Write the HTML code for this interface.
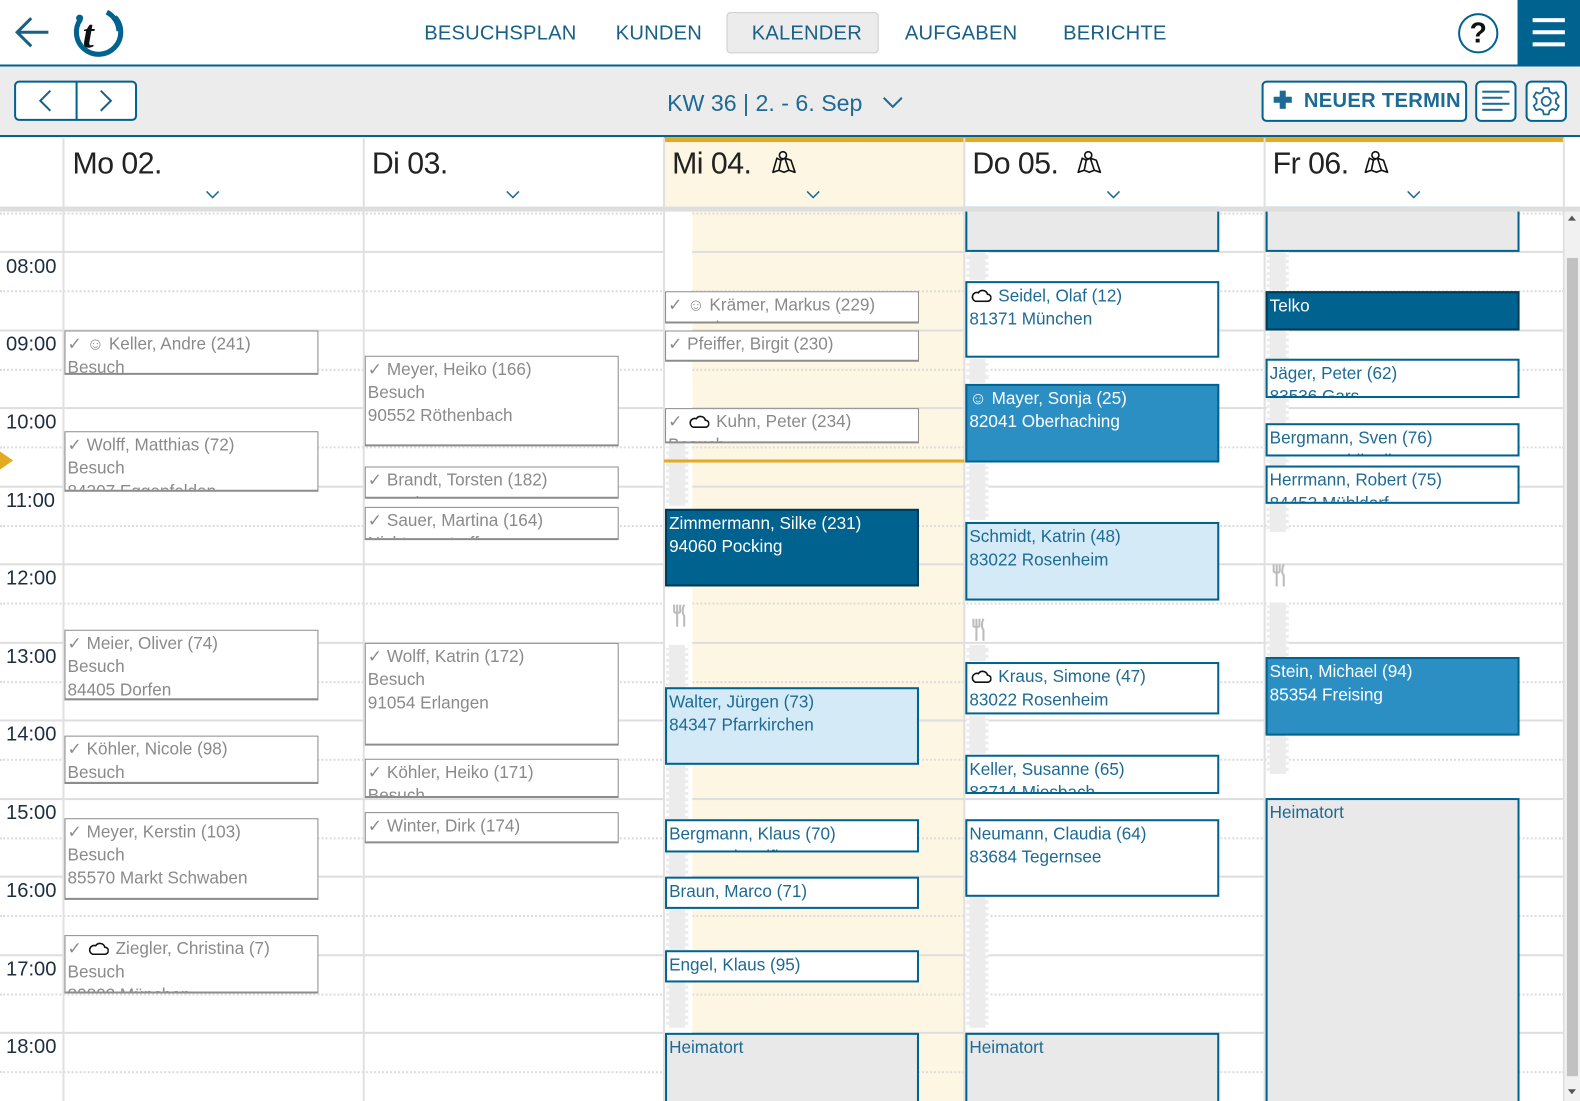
<!DOCTYPE html>
<html><head><meta charset="utf-8">
<style>
*{box-sizing:border-box;margin:0;padding:0}
html,body{width:1580px;height:1101px;overflow:hidden;background:#fff;font-family:"Liberation Sans",sans-serif}
#w{position:absolute;left:0;top:0;width:1568px;height:1093px;transform:scale(1.00765);transform-origin:0 0;overflow:hidden}
.a{position:absolute}
.nav{position:absolute;top:22px;font-size:20px;color:#1a5f86;letter-spacing:0.2px}
.hl{position:absolute;left:0;width:1552px;height:2px;background:#dedede}
.dl{position:absolute;left:0;width:1552px;height:0;border-top:2px dotted #dcdcdc}
.vl{position:absolute;top:137px;width:2px;height:960px;background:#e0e0e0}
.tl{position:absolute;left:6px;font-size:20px;color:#1e2e40}
.ev{position:absolute;overflow:hidden;font-size:17px;line-height:23px;padding:1px 0 0 2px;white-space:nowrap}
.d{border:1.5px solid #8c8c8c;border-bottom-width:2px;color:#8a8a8a;background:#fff}
.b{border:2px solid #00628f;color:#1d6a94;background:#fff}
.m{border:2px solid #00628f;color:#fff;background:#2b8fc4}
.k{border:2px solid #003a55;color:#fff;background:#00628f}
.l{border:2px solid #00628f;color:#1d6a94;background:#d4ebf7}
.g{border:2px solid #00628f;color:#1d6a94;background:#e9e9e9}
.dh{position:absolute;top:146px;font-size:30px;color:#222;letter-spacing:-0.5px}
.chev{position:absolute;top:186px;width:14px;height:14px}
.strip{position:absolute;width:22px;background:#ececec;border-left:3px dotted #fff;border-right:3px dotted #fff}
.fork{position:absolute;width:16px;height:26px}
.cl{display:inline-block;width:20px;height:14px;vertical-align:-1px;margin:0 2px}
</style></head><body><div id="w">

<!-- top bar -->
<div class="a" style="left:0;top:0;width:1568px;height:64px;background:#fff"></div>
<div class="a" style="left:0;top:64px;width:1568px;height:2px;background:#00628f"></div>
<svg class="a" style="left:14px;top:16px" width="36" height="32" viewBox="0 0 36 32"><path d="M17 2 L3 16 L17 30 M3 16 H34" fill="none" stroke="#1a5f86" stroke-width="3"/></svg>
<svg class="a" style="left:70px;top:7px" width="54" height="52" viewBox="0 0 54 52">
<path d="M10 12 A22 22 0 1 0 44 10" fill="none" stroke="#00628f" stroke-width="5"/>
<path d="M36 5 A22 22 0 0 1 48 24" fill="none" stroke="#00628f" stroke-width="5"/>
<circle cx="9" cy="11" r="3.5" fill="#00628f"/>
<text x="12" y="40" font-family="Liberation Serif,serif" font-style="italic" font-weight="bold" font-size="40" fill="#111">t</text>
</svg>
<div class="nav" style="left:421px">BESUCHSPLAN</div>
<div class="nav" style="left:611px">KUNDEN</div>
<div class="a" style="left:721px;top:12px;width:151px;height:41px;background:#ececec;border:1px solid #ccc;border-radius:4px"></div>
<div class="nav" style="left:746px">KALENDER</div>
<div class="nav" style="left:898px">AUFGABEN</div>
<div class="nav" style="left:1055px">BERICHTE</div>
<div class="a" style="left:1447px;top:13px;width:40px;height:40px;border:2.5px solid #00628f;border-radius:50%;text-align:center;font-size:28px;font-weight:bold;line-height:35px;color:#111">?</div>
<div class="a" style="left:1506px;top:0;width:62px;height:64px;background:#00628f"></div>
<div class="a" style="left:1521px;top:18px;width:32px;height:4px;background:#fff"></div>
<div class="a" style="left:1521px;top:30px;width:32px;height:4px;background:#fff"></div>
<div class="a" style="left:1521px;top:42px;width:32px;height:4px;background:#fff"></div>

<!-- toolbar -->
<div class="a" style="left:0;top:66px;width:1568px;height:68px;background:#ececec"></div>
<div class="a" style="left:0;top:134px;width:1568px;height:2px;background:#00628f"></div>
<div class="a" style="left:14px;top:80px;width:122px;height:40px;border:2px solid #00628f;border-radius:5px;background:#fff"></div>
<div class="a" style="left:75px;top:81px;width:2px;height:38px;background:#00628f"></div>
<svg class="a" style="left:37px;top:88px" width="16" height="24"><path d="M13 2 L3 12 L13 22" fill="none" stroke="#1a5f86" stroke-width="2"/></svg>
<svg class="a" style="left:97px;top:88px" width="16" height="24"><path d="M3 2 L13 12 L3 22" fill="none" stroke="#1a5f86" stroke-width="2"/></svg>
<div class="a" style="left:662px;top:89px;font-size:23px;color:#1d6a94">KW 36 | 2. - 6. Sep</div>
<svg class="a" style="left:876px;top:95px" width="20" height="14"><path d="M1 2 L10 11 L19 2" fill="none" stroke="#1d6a94" stroke-width="2"/></svg>
<div class="a" style="left:1252px;top:80px;width:204px;height:41px;border:2px solid #00628f;border-radius:5px;background:#fff"></div>
<div class="a" style="left:1264px;top:90px;width:18px;height:18px">
<div class="a" style="left:6px;top:0;width:6px;height:18px;background:#1d6a94"></div>
<div class="a" style="left:0;top:6px;width:18px;height:6px;background:#1d6a94"></div></div>
<div class="a" style="left:1294px;top:89px;font-size:20px;font-weight:bold;color:#1d6a94;letter-spacing:0.3px">NEUER TERMIN</div>
<div class="a" style="left:1464px;top:80px;width:41px;height:41px;border:2px solid #00628f;border-radius:6px;background:#fff"></div>
<div class="a" style="left:1471px;top:90px;width:27px;height:2px;background:#1d6a94"></div>
<div class="a" style="left:1471px;top:96px;width:20px;height:2px;background:#1d6a94"></div>
<div class="a" style="left:1471px;top:102px;width:27px;height:2px;background:#1d6a94"></div>
<div class="a" style="left:1471px;top:108px;width:20px;height:2px;background:#1d6a94"></div>
<div class="a" style="left:1514px;top:80px;width:41px;height:41px;border:2px solid #00628f;border-radius:6px;background:#fff"></div>
<svg class="a" style="left:1519px;top:85px" width="31" height="31" viewBox="-15.5 -15.5 31 31">
<path d="M-2.5 -13 L2.5 -13 L3.3 -9.3 L6.3 -7.6 L10 -8.9 L12.5 -4.5 L9.6 -2 L9.6 2 L12.5 4.5 L10 8.9 L6.3 7.6 L3.3 9.3 L2.5 13 L-2.5 13 L-3.3 9.3 L-6.3 7.6 L-10 8.9 L-12.5 4.5 L-9.6 2 L-9.6 -2 L-12.5 -4.5 L-10 -8.9 L-6.3 -7.6 L-3.3 -9.3 Z" fill="none" stroke="#1d6a94" stroke-width="1.8" stroke-linejoin="round"/>
<circle r="4.5" fill="none" stroke="#1d6a94" stroke-width="1.8"/></svg>

<!-- day header -->
<div class="a" style="left:659px;top:136px;width:298px;height:70px;background:#fdf6e2"></div>
<div class="a" style="left:659px;top:136px;width:893px;height:5px;background:#e4aa22"></div>
<div class="dh" style="left:72px">Mo 02.</div>
<div class="dh" style="left:369px">Di 03.</div>
<div class="dh" style="left:667px">Mi 04.</div>
<div class="dh" style="left:965px">Do 05.</div>
<div class="dh" style="left:1263px">Fr 06.</div>
<svg class="chev" style="left:204px" viewBox="0 0 14 14"><path d="M1 4 L7 10 L13 4" fill="none" stroke="#1d6a94" stroke-width="1.5"/></svg>
<svg class="chev" style="left:502px" viewBox="0 0 14 14"><path d="M1 4 L7 10 L13 4" fill="none" stroke="#1d6a94" stroke-width="1.5"/></svg>
<svg class="chev" style="left:800px" viewBox="0 0 14 14"><path d="M1 4 L7 10 L13 4" fill="none" stroke="#1d6a94" stroke-width="1.5"/></svg>
<svg class="chev" style="left:1098px" viewBox="0 0 14 14"><path d="M1 4 L7 10 L13 4" fill="none" stroke="#1d6a94" stroke-width="1.5"/></svg>
<svg class="chev" style="left:1396px" viewBox="0 0 14 14"><path d="M1 4 L7 10 L13 4" fill="none" stroke="#1d6a94" stroke-width="1.5"/></svg>
<svg class="a" style="left:764px;top:148px" width="28" height="26" viewBox="0 0 28 26"><path d="M3 23 L7 9 L11 11 L15 9 L21 11 L25 23 L19 21 L14 23 L9 21 Z M11 11 L9 21 M15 9 L19 21" fill="none" stroke="#111" stroke-width="1.6" stroke-linejoin="round"/><circle cx="13" cy="6" r="3.5" fill="#fff" stroke="#111" stroke-width="1.6"/></svg>
<svg class="a" style="left:1067px;top:148px" width="28" height="26" viewBox="0 0 28 26"><path d="M3 23 L7 9 L11 11 L15 9 L21 11 L25 23 L19 21 L14 23 L9 21 Z M11 11 L9 21 M15 9 L19 21" fill="none" stroke="#111" stroke-width="1.6" stroke-linejoin="round"/><circle cx="13" cy="6" r="3.5" fill="#fff" stroke="#111" stroke-width="1.6"/></svg>
<svg class="a" style="left:1352px;top:148px" width="28" height="26" viewBox="0 0 28 26"><path d="M3 23 L7 9 L11 11 L15 9 L21 11 L25 23 L19 21 L14 23 L9 21 Z M11 11 L9 21 M15 9 L19 21" fill="none" stroke="#111" stroke-width="1.6" stroke-linejoin="round"/><circle cx="13" cy="6" r="3.5" fill="#fff" stroke="#111" stroke-width="1.6"/></svg>

<!-- grid -->
<div class="a" style="left:687px;top:210px;width:270px;height:890px;background:#fdf6e2"></div>
<div class="dl" style="top:211px"></div>
<div class="hl" style="top:249px"></div><div class="dl" style="top:288px"></div>
<div class="hl" style="top:327px"></div><div class="dl" style="top:366px"></div>
<div class="hl" style="top:404px"></div><div class="dl" style="top:443px"></div>
<div class="hl" style="top:482px"></div><div class="dl" style="top:521px"></div>
<div class="hl" style="top:559px"></div><div class="dl" style="top:598px"></div>
<div class="hl" style="top:637px"></div><div class="dl" style="top:676px"></div>
<div class="hl" style="top:714px"></div><div class="dl" style="top:753px"></div>
<div class="hl" style="top:792px"></div><div class="dl" style="top:831px"></div>
<div class="hl" style="top:869px"></div><div class="dl" style="top:908px"></div>
<div class="hl" style="top:947px"></div><div class="dl" style="top:986px"></div>
<div class="hl" style="top:1024px"></div><div class="dl" style="top:1063px"></div>
<div class="vl" style="left:62px"></div>
<div class="vl" style="left:360px"></div>
<div class="vl" style="left:658px"></div>
<div class="vl" style="left:956px"></div>
<div class="vl" style="left:1254px"></div>
<div class="vl" style="left:1551px"></div>

<div class="tl" style="top:254px">08:00</div>
<div class="tl" style="top:331px">09:00</div>
<div class="tl" style="top:408px">10:00</div>
<div class="tl" style="top:486px">11:00</div>
<div class="tl" style="top:563px">12:00</div>
<div class="tl" style="top:641px">13:00</div>
<div class="tl" style="top:718px">14:00</div>
<div class="tl" style="top:796px">15:00</div>
<div class="tl" style="top:873px">16:00</div>
<div class="tl" style="top:951px">17:00</div>
<div class="tl" style="top:1028px">18:00</div>

<!-- travel strips -->
<div class="a" style="left:660px;top:210px;width:27px;height:890px;background:#fff"></div>
<div class="strip" style="left:661px;top:440px;height:62px"></div>
<div class="strip" style="left:661px;top:640px;height:380px"></div>
<div class="strip" style="left:959px;top:250px;height:28px"></div>
<div class="strip" style="left:959px;top:356px;height:24px"></div>
<div class="strip" style="left:959px;top:460px;height:56px"></div>
<div class="strip" style="left:959px;top:640px;height:16px"></div>
<div class="strip" style="left:959px;top:710px;height:38px"></div>
<div class="strip" style="left:959px;top:890px;height:130px"></div>
<div class="strip" style="left:1257px;top:250px;height:38px"></div>
<div class="strip" style="left:1257px;top:328px;height:200px"></div>
<div class="strip" style="left:1257px;top:598px;height:170px"></div>
<svg class="fork" style="left:666px;top:598px" viewBox="0 0 16 26"><path d="M3 2 V10 M6 2 V10 M9 2 V10 M3 10 H9 M6 10 V24 M13 2 C11 6 11 11 13 13 V24" fill="none" stroke="#bbb" stroke-width="2"/></svg>
<svg class="fork" style="left:963px;top:612px" viewBox="0 0 16 26"><path d="M3 2 V10 M6 2 V10 M9 2 V10 M3 10 H9 M6 10 V24 M13 2 C11 6 11 11 13 13 V24" fill="none" stroke="#bbb" stroke-width="2"/></svg>
<svg class="fork" style="left:1261px;top:558px" viewBox="0 0 16 26"><path d="M3 2 V10 M6 2 V10 M9 2 V10 M3 10 H9 M6 10 V24 M13 2 C11 6 11 11 13 13 V24" fill="none" stroke="#bbb" stroke-width="2"/></svg>

<!-- Mo -->
<div class="ev d" style="left:64px;top:328px;width:252px;height:44px">✓ ☺ Keller, Andre (241)<br>Besuch</div>
<div class="ev d" style="left:64px;top:428px;width:252px;height:60px">✓ Wolff, Matthias (72)<br>Besuch<br>84307 Eggenfelden</div>
<div class="ev d" style="left:64px;top:625px;width:252px;height:70px">✓ Meier, Oliver (74)<br>Besuch<br>84405 Dorfen</div>
<div class="ev d" style="left:64px;top:730px;width:252px;height:48px">✓ Köhler, Nicole (98)<br>Besuch</div>
<div class="ev d" style="left:64px;top:812px;width:252px;height:81px">✓ Meyer, Kerstin (103)<br>Besuch<br>85570 Markt Schwaben</div>
<div class="ev d" style="left:64px;top:928px;width:252px;height:58px">✓ <svg class="cl" viewBox="0 0 20 14"><path d="M4 13 H16 A3.5 3.5 0 0 0 16 6 A5 5 0 0 0 7 4.5 A4.3 4.3 0 0 0 4 13 Z" fill="none" stroke="#111" stroke-width="1.6"/></svg> Ziegler, Christina (7)<br>Besuch<br>80802 München</div>
<!-- Di -->
<div class="ev d" style="left:362px;top:353px;width:252px;height:90px">✓ Meyer, Heiko (166)<br>Besuch<br>90552 Röthenbach</div>
<div class="ev d" style="left:362px;top:463px;width:252px;height:32px">✓ Brandt, Torsten (182)<br>Besuch</div>
<div class="ev d" style="left:362px;top:503px;width:252px;height:33px">✓ Sauer, Martina (164)<br>Nicht angetroffen</div>
<div class="ev d" style="left:362px;top:638px;width:252px;height:102px">✓ Wolff, Katrin (172)<br>Besuch<br>91054 Erlangen</div>
<div class="ev d" style="left:362px;top:753px;width:252px;height:39px">✓ Köhler, Heiko (171)<br>Besuch</div>
<div class="ev d" style="left:362px;top:806px;width:252px;height:31px">✓ Winter, Dirk (174)<br>Besuch</div>
<!-- Mi -->
<div class="ev d" style="left:660px;top:289px;width:252px;height:32px">✓ ☺ Krämer, Markus (229)<br>Besuch</div>
<div class="ev d" style="left:660px;top:328px;width:252px;height:31px">✓ Pfeiffer, Birgit (230)<br>Besuch</div>
<div class="ev d" style="left:660px;top:405px;width:252px;height:35px">✓ <svg class="cl" viewBox="0 0 20 14"><path d="M4 13 H16 A3.5 3.5 0 0 0 16 6 A5 5 0 0 0 7 4.5 A4.3 4.3 0 0 0 4 13 Z" fill="none" stroke="#111" stroke-width="1.6"/></svg> Kuhn, Peter (234)<br>Besuch</div>
<div class="a" style="left:659px;top:456px;width:298px;height:3px;background:#e4aa22"></div>
<div class="a" style="left:0;top:448px;width:0;height:0;border-top:9px solid transparent;border-bottom:9px solid transparent;border-left:13px solid #e4aa22"></div>
<div class="ev k" style="left:660px;top:505px;width:252px;height:77px">Zimmermann, Silke (231)<br>94060 Pocking</div>
<div class="ev l" style="left:660px;top:682px;width:252px;height:77px">Walter, Jürgen (73)<br>84347 Pfarrkirchen</div>
<div class="ev b" style="left:660px;top:813px;width:252px;height:33px">Bergmann, Klaus (70)<br>84130 Dingolfing</div>
<div class="ev b" style="left:660px;top:870px;width:252px;height:32px">Braun, Marco (71)<br>84137 Vilsbiburg</div>
<div class="ev b" style="left:660px;top:943px;width:252px;height:32px">Engel, Klaus (95)<br>85368 Moosburg</div>
<div class="ev g" style="left:660px;top:1025px;width:252px;height:80px">Heimatort</div>
<!-- Do -->
<div class="ev g" style="left:958px;top:205px;width:252px;height:45px"></div>
<div class="ev b" style="left:958px;top:279px;width:252px;height:76px"><svg class="cl" viewBox="0 0 20 14"><path d="M4 13 H16 A3.5 3.5 0 0 0 16 6 A5 5 0 0 0 7 4.5 A4.3 4.3 0 0 0 4 13 Z" fill="none" stroke="#111" stroke-width="1.6"/></svg> Seidel, Olaf (12)<br>81371 München</div>
<div class="ev m" style="left:958px;top:381px;width:252px;height:78px">☺ Mayer, Sonja (25)<br>82041 Oberhaching</div>
<div class="ev l" style="left:958px;top:518px;width:252px;height:78px">Schmidt, Katrin (48)<br>83022 Rosenheim</div>
<div class="ev b" style="left:958px;top:657px;width:252px;height:52px"><svg class="cl" viewBox="0 0 20 14"><path d="M4 13 H16 A3.5 3.5 0 0 0 16 6 A5 5 0 0 0 7 4.5 A4.3 4.3 0 0 0 4 13 Z" fill="none" stroke="#111" stroke-width="1.6"/></svg> Kraus, Simone (47)<br>83022 Rosenheim</div>
<div class="ev b" style="left:958px;top:749px;width:252px;height:39px">Keller, Susanne (65)<br>83714 Miesbach</div>
<div class="ev b" style="left:958px;top:813px;width:252px;height:77px">Neumann, Claudia (64)<br>83684 Tegernsee</div>
<div class="ev g" style="left:958px;top:1025px;width:252px;height:80px">Heimatort</div>
<!-- Fr -->
<div class="ev g" style="left:1256px;top:205px;width:252px;height:45px"></div>
<div class="ev k" style="left:1256px;top:289px;width:252px;height:39px">Telko</div>
<div class="ev b" style="left:1256px;top:356px;width:252px;height:39px">Jäger, Peter (62)<br>83536 Gars</div>
<div class="ev b" style="left:1256px;top:420px;width:252px;height:33px">Bergmann, Sven (76)<br>84478 Waldkraiburg</div>
<div class="ev b" style="left:1256px;top:462px;width:252px;height:38px">Herrmann, Robert (75)<br>84453 Mühldorf</div>
<div class="ev m" style="left:1256px;top:652px;width:252px;height:78px">Stein, Michael (94)<br>85354 Freising</div>
<div class="ev g" style="left:1256px;top:792px;width:252px;height:320px">Heimatort</div>

<!-- header separator on top -->
<div class="a" style="left:0;top:205px;width:1568px;height:5px;background:#dedede"></div>

<!-- scrollbar -->
<div class="a" style="left:1553px;top:210px;width:15px;height:883px;background:#f1f1f1"></div>
<div class="a" style="left:1555px;top:256px;width:11px;height:812px;background:#c1c1c1"></div>
<div class="a" style="left:1556px;top:214px;width:0;height:0;border-left:4px solid transparent;border-right:4px solid transparent;border-bottom:5px solid #555"></div>
<div class="a" style="left:1556px;top:1081px;width:0;height:0;border-left:4px solid transparent;border-right:4px solid transparent;border-top:5px solid #555"></div>
</div></body></html>
